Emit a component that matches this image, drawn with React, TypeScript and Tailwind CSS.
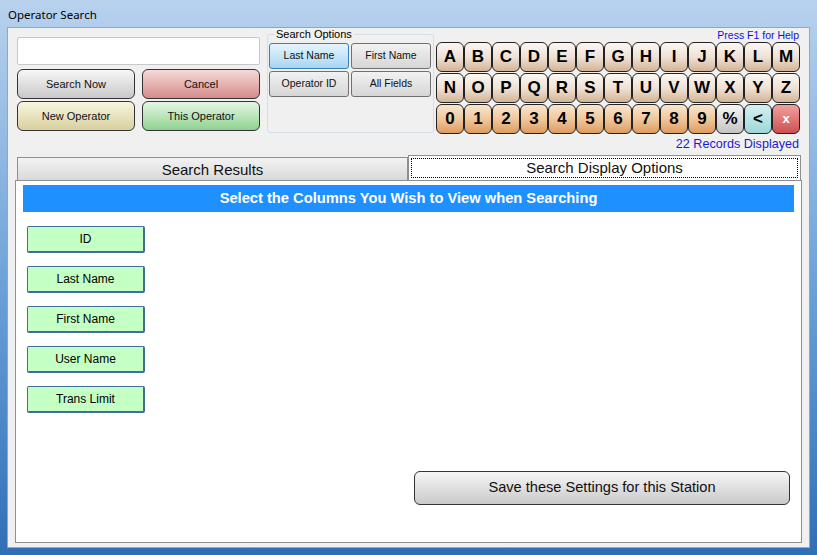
import React from 'react';

const letters1 = ['A', 'B', 'C', 'D', 'E', 'F', 'G', 'H', 'I', 'J', 'K', 'L', 'M'];
const letters2 = ['N', 'O', 'P', 'Q', 'R', 'S', 'T', 'U', 'V', 'W', 'X', 'Y', 'Z'];
const digits = ['0', '1', '2', '3', '4', '5', '6', '7', '8', '9'];
const columns = ['ID', 'Last Name', 'First Name', 'User Name', 'Trans Limit'];

const keyBase =
    'w-[28px] h-[30px] flex items-center justify-center rounded-[6px] border border-[#222] text-[17px] font-bold text-black';

const Key: React.FC<{ label: string; tone?: string }> = ({ label, tone }) => (
    <div className={`${keyBase} ${tone || 'bg-linear-to-b from-[#fbf7f3] via-[#efe2d6] to-[#d4b496]'}`}>{label}</div>
);

const optBtn = 'w-[80px] h-[26px] rounded-[3px] border text-[10.5px] text-[#111]';
const bigBtn = 'h-[30px] rounded-[6px] border border-[#333] text-[11px] text-[#111]';

const App: React.FC = () => {
    return (
        <div
            className="w-[817px] h-[555px] relative overflow-hidden bg-linear-to-b from-[#b8d2ee] via-[#6ea3d8] to-[#2f6fb6] pt-[27px] px-[7px] pb-[7px]"
            style={{ fontFamily: '"Liberation Sans", Arial, sans-serif' }}
        >
            {/* title */}
            <div className="absolute left-[8px] top-[6px] text-[11.5px] text-black" style={{ fontFamily: '"Noto Sans", "Liberation Sans", sans-serif' }}>
                Operator Search
            </div>

            <div className="w-full h-full bg-[#f0f0f0] border border-[#8aa9c9] flex flex-col">
                {/* top area */}
                <div className="flex h-[127px]">
                    {/* left column */}
                    <div className="ml-[9px] mt-[9px] w-[243px] flex flex-col">
                        <div className="h-[28px] bg-white border border-[#c8c8c8] rounded-[2px]" />
                        <div className="grid grid-cols-2 gap-x-[7px] gap-y-[2px] mt-[4px]">
                            <button className={`${bigBtn} bg-linear-to-b from-[#f7f7f7] to-[#c9c9c9]`}>Search Now</button>
                            <button className={`${bigBtn} bg-linear-to-b from-[#f6dada] to-[#d48c8c]`}>Cancel</button>
                            <button className={`${bigBtn} bg-linear-to-b from-[#f8f6e0] to-[#d8d09e]`}>New Operator</button>
                            <button className={`${bigBtn} bg-linear-to-b from-[#e6f6e6] to-[#8ed28e]`}>This Operator</button>
                        </div>
                    </div>

                    {/* search options group */}
                    <div className="relative ml-[7px] mt-[6px] w-[167px] h-[99px] border border-[#d5dfe5] rounded-[3px] pl-[1px] pt-[8px]">
                        <div className="absolute left-[6px] top-[-7px] bg-[#f0f0f0] px-[2px] text-[11px] leading-[13px] text-black">Search Options</div>
                        <div className="grid grid-cols-[80px_80px] gap-x-[2px] gap-y-[2px]">
                            <button className={`${optBtn} border-[#3c7fb1] bg-linear-to-b from-[#e6f5fd] to-[#a6d6f3]`}>Last Name</button>
                            <button className={`${optBtn} border-[#707070] bg-linear-to-b from-[#f2f2f2] to-[#d6d6d6]`}>First Name</button>
                            <button className={`${optBtn} border-[#707070] bg-linear-to-b from-[#f2f2f2] to-[#d6d6d6]`}>Operator ID</button>
                            <button className={`${optBtn} border-[#707070] bg-linear-to-b from-[#f2f2f2] to-[#d6d6d6]`}>All Fields</button>
                        </div>
                    </div>

                    {/* keypad */}
                    <div className="ml-[2px] flex flex-col w-[366px]">
                        <div className="text-right text-[10.5px] leading-[14px] text-[#1010e0] pr-[3px] h-[14px]">Press F1 for Help</div>
                        <div className="flex flex-col gap-[1px]">
                            <div className="flex">
                                {letters1.map(l => <Key key={l} label={l} />)}
                            </div>
                            <div className="flex">
                                {letters2.map(l => <Key key={l} label={l} />)}
                            </div>
                            <div className="flex">
                                {digits.map(d => (
                                    <Key key={d} label={d} tone="bg-linear-to-b from-[#f8e6d2] via-[#f0c79c] to-[#dc9c5e]" />
                                ))}
                                <Key label="%" tone="bg-linear-to-b from-[#f6f6f6] to-[#c4c4c4]" />
                                <Key label="<" tone="bg-linear-to-b from-[#d6f0f0] to-[#9ed6d6]" />
                                <div className={`${keyBase} bg-linear-to-b from-[#f0a0a0] to-[#cc5050] !text-white !text-[13px]`}>x</div>
                            </div>
                        </div>
                        <div className="text-right text-[12.6px] leading-[14px] text-[#1a1ad0] pr-[3px] mt-[3px]">22 Records Displayed</div>
                    </div>
                </div>

                {/* tabs */}
                <div className="flex ml-[9px] mr-[8px] h-[25px] items-end">
                    <div className="w-[391px] h-[23px] border border-[#8e8f8f] border-b-0 bg-linear-to-b from-[#f3f3f3] to-[#d9d9d9] flex items-center justify-center text-[15px] text-[#111] pt-[2px]">
                        Search Results
                    </div>
                    <div className="flex-1 h-[25px] border border-[#8e8f8f] border-b-0 bg-white p-[2px]">
                        <div className="h-full border border-dotted border-black flex items-center justify-center text-[15px] text-[#111]">
                            Search Display Options
                        </div>
                    </div>
                </div>

                {/* tab panel */}
                <div className="mx-[7px] mb-[4px] flex-1 bg-white border border-[#8e8f8f] px-[7px] pt-[4px] flex flex-col">
                    <div className="h-[27px] bg-[#1e90ff] flex items-center justify-center text-white font-bold text-[14.7px]">
                        Select the Columns You Wish to View when Searching
                    </div>
                    <div className="flex flex-col gap-[13px] mt-[14px] ml-[4px]">
                        {columns.map(c => (
                            <div
                                key={c}
                                className="w-[118px] h-[27px] bg-[#c4ffc4] border border-[#3f6f98] border-b-2 border-r-2 rounded-[2px] flex items-center justify-center text-[12px] text-black"
                            >
                                {c}
                            </div>
                        ))}
                    </div>
                    <div className="flex-1" />
                    <div className="flex justify-end mr-[4px] mb-[37px]">
                        <button className="w-[376px] h-[34px] rounded-[6px] border border-[#333] bg-linear-to-b from-[#f6f6f6] to-[#cacaca] text-[14.6px] text-[#111]">
                            Save these Settings for this Station
                        </button>
                    </div>
                </div>
            </div>
        </div>
    );
};

export default App;
